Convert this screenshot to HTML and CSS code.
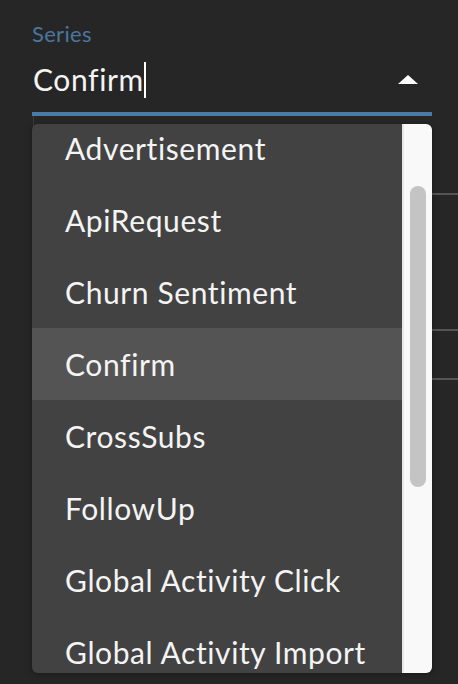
FILE: index.html
```html
<!DOCTYPE html>
<html lang="en">

<head>
    <meta charset="UTF-8">
    <title>Series</title>
    <link rel="stylesheet" href="styles.css">
</head>

<body>
    <div class="field">
        <label class="field-label">Series</label>
        <div class="field-input">
            <span class="field-value">Confirm</span><span class="text-caret"></span>
            <span class="arrow-up"></span>
        </div>

        <div class="dropdown">
            <ul class="options">
                <li>Advertisement</li>
                <li>ApiRequest</li>
                <li>Churn Sentiment</li>
                <li class="active">Confirm</li>
                <li>CrossSubs</li>
                <li>FollowUp</li>
                <li>Global Activity Click</li>
                <li>Global Activity Import</li>
            </ul>
            <div class="scrollbar">
                <div class="thumb"></div>
            </div>
        </div>
    </div>

    <div class="table">
        <div class="row"></div>
        <div class="row row-tall"></div>
        <div class="row row-short"></div>
    </div>
</body>

</html>
```

FILE: styles.css
```css
* {
    box-sizing: border-box;
}

body {
    margin: 0;
    background-color: #262626;
    font-family: Lato, "Liberation Sans", sans-serif;
    color: #f4f4f4;
    height: 684px;
    overflow: hidden;
}

.field {
    position: relative;
    margin: 0 26px 0 32px;
    padding-top: 21px;
}

.field-label {
    display: block;
    font-size: 22px;
    line-height: 26px;
    letter-spacing: 0.3px;
    color: #4a76a0;
}

.field-input {
    display: flex;
    align-items: center;
    height: 69px;
    border-bottom: 4px solid #4a7aa5;
}

.field-value {
    font-size: 30px;
    letter-spacing: 0.6px;
    padding-left: 1px;
    padding-bottom: 2px;
}

.text-caret {
    width: 2px;
    height: 36px;
    background-color: #fff;
}

.arrow-up {
    margin-left: auto;
    margin-right: 14px;
    width: 0;
    height: 0;
    border-left: 10px solid transparent;
    border-right: 10px solid transparent;
    border-bottom: 9px solid #fff;
}

.dropdown {
    position: absolute;
    top: 124px;
    left: 0;
    right: 0;
    height: 549px;
    display: flex;
    background-color: #424242;
    border-radius: 6px;
    overflow: hidden;
    z-index: 2;
    box-shadow: 0 2px 6px rgba(0, 0, 0, 0.3);
}

.options {
    flex: 1;
    list-style: none;
    margin: -12px 0 0 0;
    padding: 0;
}

.options li {
    height: 72px;
    line-height: 72px;
    padding-left: 33px;
    font-size: 30px;
    letter-spacing: 0.6px;
    white-space: nowrap;
}

.options li.active {
    background-color: #545454;
}

.scrollbar {
    width: 30px;
    background-color: #f9f9f9;
    border-left: 2px solid #e8e8e8;
    padding: 62px 0 0 6px;
}

.thumb {
    width: 16px;
    height: 301px;
    border-radius: 8px;
    background-color: #c4c4c4;
}

.table {
    margin: 0 0 0 33px;
    border-left: 1px solid #3a3a3a;
    padding-top: 77px;
}

.row {
    border-bottom: 2px solid #555;
}

.row-tall {
    height: 136px;
}

.row-short {
    height: 49px;
}
```
